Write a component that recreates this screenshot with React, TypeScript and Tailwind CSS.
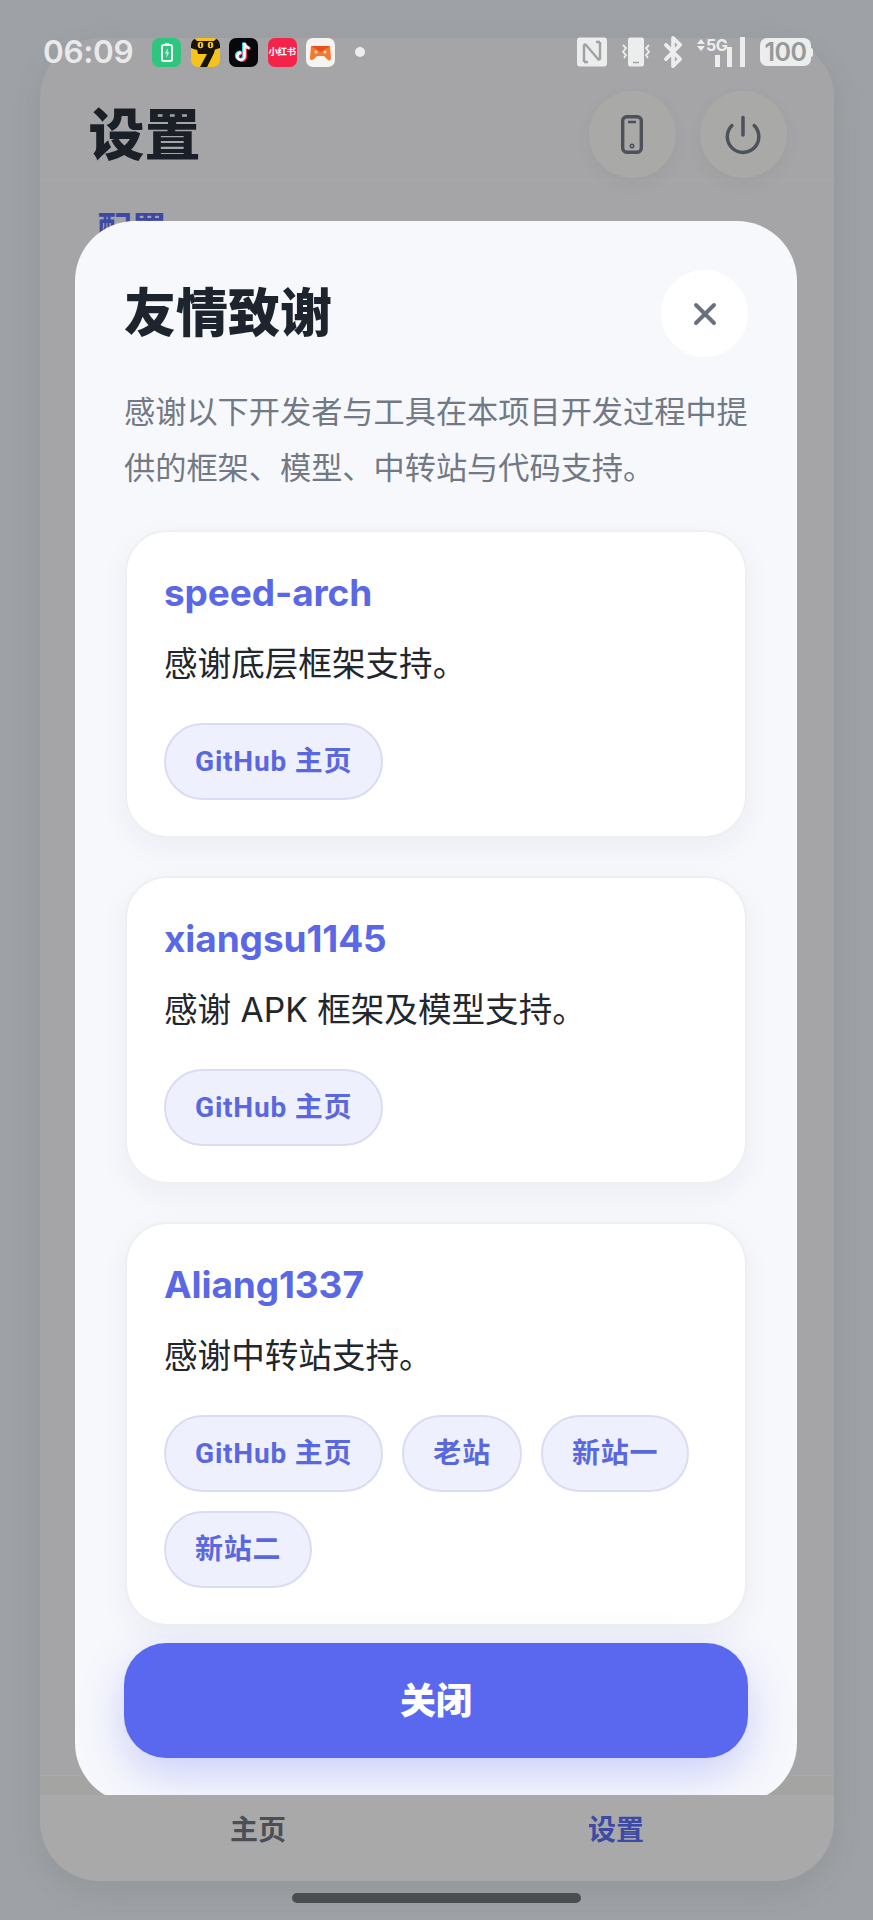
import { Bluetooth, Power, X } from "lucide-react";

const cjk = "font-['Inter','Noto_Sans_CJK_SC',sans-serif]";

type Credit = {
  name: string;
  note: string;
  links: string[];
};

const credits: Credit[] = [
  { name: "speed-arch", note: "感谢底层框架支持。", links: ["GitHub 主页"] },
  { name: "xiangsu1145", note: "感谢 APK 框架及模型支持。", links: ["GitHub 主页"] },
  { name: "Aliang1337", note: "感谢中转站支持。", links: ["GitHub 主页", "老站", "新站一", "新站二"] },
];

function BatteryApp() {
  return (
    <div className="flex h-[29px] w-[29px] items-center justify-center rounded-[7px] bg-[#2fc57f]">
      <svg width="14" height="20" viewBox="0 0 14 20" fill="none">
        <path d="M5 1h4v2H5z" fill="#eefbf4" />
        <rect x="2" y="3" width="10" height="16" rx="1.5" stroke="#eefbf4" strokeWidth="2" />
        <path d="M8 6 5 11.5h2L6 16l3.2-5.5H7.2z" fill="#eefbf4" />
      </svg>
    </div>
  );
}

function CatApp() {
  return (
    <div className="h-[29px] w-[29px] overflow-hidden rounded-[7px] bg-[#f6c31c]">
      <svg width="29" height="29" viewBox="0 0 29 29">
        <path d="M0 0h3l3 3h17l3-3h3v10c-4 1-6 2-8 2H8c-3 0-5-1-8-2z" fill="#17130f" />
        <ellipse cx="9.5" cy="7" rx="2.8" ry="3.2" fill="#f6c31c" />
        <ellipse cx="19.5" cy="7" rx="2.8" ry="3.2" fill="#f6c31c" />
        <path d="M9.5 5v4M19.5 5v4" stroke="#17130f" strokeWidth="1.2" />
        <path d="M6 11h18l-1 4-7 14H9l7-13H7z" fill="#17130f" />
      </svg>
    </div>
  );
}

function TiktokApp() {
  const note = "M15.5 5v13.2a3.6 3.6 0 1 1-3-3.5M15.5 5c.4 2.8 2.2 4.6 5 5";
  return (
    <div className="h-[29px] w-[29px] rounded-[7px] bg-[#08070c]">
      <svg width="29" height="29" viewBox="0 0 29 29" fill="none">
        <path d={note} stroke="#2ad8e0" strokeWidth="3" transform="translate(-1 -0.6)" />
        <path d={note} stroke="#f0305a" strokeWidth="3" transform="translate(1 0.8)" />
        <path d={note} stroke="#ffffff" strokeWidth="2.6" />
      </svg>
    </div>
  );
}

function RedBookApp() {
  return (
    <div className={`flex h-[29px] w-[29px] items-center justify-center rounded-[7px] bg-[#f3234a] text-[9.500px] font-bold leading-none tracking-[-0.5px] text-white ${cjk}`}>
      小红书
    </div>
  );
}

function GameApp() {
  return (
    <div className="h-[29px] w-[29px] rounded-[7px] bg-[#f6f3f0]">
      <svg width="29" height="29" viewBox="0 0 29 29">
        <path d="M5 8h19l1 12c0 3-3 3-4 1l-3-3h-7l-3 3c-2 2-4 1-4-1z" fill="#f3792b" />
        <path d="M5 8h19l-9.500 6z" fill="#e94f1d" />
        <path d="M8 14h4M10 12v4" stroke="#fde3c8" strokeWidth="1" />
        <circle cx="19" cy="14" r="1.500" fill="#fde3c8" />
      </svg>
    </div>
  );
}

function StatusBar() {
  return (
    <div className="absolute left-0 top-[37px] z-30 flex h-[30px] w-full items-center justify-between pl-[43px] pr-[60px]">
      <div className="flex items-center">
        <span className="w-[109px] font-['Inter',sans-serif] text-[31.500px] font-semibold leading-none tracking-[-0.3px] text-[#e9eaeb]">06:09</span>
        <div className="flex items-center gap-[9.500px]">
          <BatteryApp />
          <CatApp />
          <TiktokApp />
          <RedBookApp />
          <GameApp />
        </div>
        <span className="ml-[20px] h-[10px] w-[10px] rounded-full bg-[#eceded]" />
      </div>
      <div className="flex items-center">
        <svg width="30" height="30" viewBox="0 0 30 30">
          <rect width="30" height="29" y="0.500" rx="3" fill="#eceded" />
          <path d="M7 25V9c0-1.500 1-2 2-1l12 14c1 1 2 .5 2-1V5" fill="none" stroke="#a0a3a5" strokeWidth="2.500" />
          <path d="M7 25h4M19 5h4" fill="none" stroke="#a0a3a5" strokeWidth="2.500" />
        </svg>
        <svg className="ml-[14px]" width="31" height="30" viewBox="0 0 31 30">
          <rect x="7" y="0.500" width="16" height="29" rx="2.500" fill="#eceded" />
          <path d="M12 25.500h6" stroke="#a0a3a5" strokeWidth="1.500" />
          <path d="M2 8l3 3-3 4 3 3-2 3M28 8l-3 3 3 4-3 3 2 3" fill="none" stroke="#eceded" strokeWidth="1.800" />
        </svg>
        <Bluetooth className="ml-[4px] text-[#eceded]" size={34} strokeWidth={2.600} />
        <div className="relative ml-[7px] h-[30px] w-[48px]">
          <span className="absolute left-[9px] top-[-1px] font-['Inter',sans-serif] text-[16px] font-bold leading-[18px] tracking-[-0.5px] text-[#eceded]">5G</span>
          <span className="absolute left-0 top-[2px] h-0 w-0 border-x-[4px] border-b-[5px] border-x-transparent border-b-[#eceded]" />
          <span className="absolute left-0 top-[9px] h-0 w-0 border-x-[4px] border-t-[5px] border-x-transparent border-t-[#eceded]" />
          <span className="absolute bottom-0 left-[18px] h-[12px] w-[5px] bg-[#eceded]" />
          <span className="absolute bottom-0 left-[30px] h-[20px] w-[5px] bg-[#eceded]" />
          <span className="absolute bottom-0 left-[43px] h-[30px] w-[5px] bg-[#eceded]" />
        </div>
        <div className="ml-[15px] flex items-center">
          <div className="flex h-[28px] w-[51px] items-center justify-center rounded-[7px] bg-[#eceded] font-['Inter',sans-serif] text-[25px] font-semibold leading-none tracking-[-0.5px] text-[#96999c]">100</div>
          <span className="h-[9px] w-[2px] rounded-r-full bg-[#eceded]" />
        </div>
      </div>
    </div>
  );
}

function RoundIconButton({ children }: { children: React.ReactNode }) {
  return (
    <div className="flex h-[87px] w-[87px] items-center justify-center rounded-full bg-[#a9a9a8] shadow-[0_6px_16px_rgba(60,60,70,0.06)]">{children}</div>
  );
}

function CreditCard({ credit }: { credit: Credit }) {
  return (
    <article className={`rounded-[42px] border-2 border-[#eeeff3] bg-white px-[37px] pb-[36px] pt-[34px] shadow-[0_10px_30px_rgba(30,40,70,0.05)] ${cjk}`}>
      <h3 className="text-[37px] font-bold leading-[54px] tracking-[-0.1px] text-[#5a68e6]">{credit.name}</h3>
      <p className="mt-[19px] text-[33.600px] leading-[50px] text-[#22262d]">{credit.note}</p>
      <div className="mt-[34px] flex flex-wrap gap-x-[19px] gap-y-[19px]">
        {credit.links.map((link) => (
          <span
            key={link}
            className="flex h-[77px] items-center rounded-full border-2 border-[#dadcf3] bg-[#eff0fd] px-[29px] font-['Roboto','Noto_Sans_CJK_SC',sans-serif] text-[28px] font-bold tracking-[0.8px] text-[#5a68e0]"
          >
            {link}
          </span>
        ))}
      </div>
    </article>
  );
}

function CreditsModal() {
  return (
    <section className={`absolute left-[75px] top-[221px] z-10 h-[1582px] w-[722px] rounded-[60px] bg-[#f7f8fc] px-[50px] pt-[49px] ${cjk}`}>
      <div className="flex h-[87px] items-center justify-between">
        <h2 className="-ml-px text-[52px] font-black text-[#1e242d]">友情致谢</h2>
        <button className="-mr-px flex h-[87px] w-[87px] items-center justify-center rounded-full bg-white text-[#69707e]">
          <X size={36} strokeWidth={2.600} />
        </button>
      </div>
      <p className="mt-[27px] -ml-px w-[632px] text-[31.200px] leading-[56px] text-[#727985]">
        感谢以下开发者与工具在本项目开发过程中提供的框架、模型、中转站与代码支持。
      </p>
      <div className="mt-[34px] flex flex-col gap-[38px]">
        {credits.map((credit) => (
          <CreditCard key={credit.name} credit={credit} />
        ))}
      </div>
      <button className="mt-[17px] flex h-[115px] w-[624px] -translate-x-px items-center justify-center rounded-[42px] bg-[#5a68f0] text-[36px] font-black text-white shadow-[0_16px_44px_rgba(90,104,240,0.28)]">
        关闭
      </button>
    </section>
  );
}

export default function App() {
  return (
    <div className={`relative flex h-[1920px] w-[873px] flex-col items-center overflow-hidden bg-[#9ea1a5] pt-[38px] ${cjk}`}>
      <StatusBar />
      <div className="flex h-[1843px] w-[794px] flex-col overflow-hidden rounded-[60px] bg-[#a5a5a8] shadow-[0_10px_30px_rgba(70,70,80,0.12)]">
        <header className="flex h-[143px] shrink-0 items-end justify-between border-b border-[#a8a8aa] pb-[2px] pl-[49px] pr-[47px]">
          <h1 className="mb-[8px] text-[56px] font-black leading-[70px] text-[#1b2028]">设置</h1>
          <div className="flex gap-[24px]">
            <RoundIconButton>
              <svg width="22" height="39" viewBox="0 0 22 39" fill="none" stroke="#4d5158" strokeWidth="3.400">
                <rect x="1.700" y="1.700" width="18.600" height="35.600" rx="4" />
                <path d="M7 7h8" strokeWidth="2.600" />
                <circle cx="11" cy="31" r="0.800" />
              </svg>
            </RoundIconButton>
            <RoundIconButton>
              <Power className="text-[#4d5158]" size={42} strokeWidth={2} />
            </RoundIconButton>
          </div>
        </header>
        <div className="flex-1 pl-[58px] pt-[24px]">
          <p className="text-[34.500px] font-bold leading-[48px] text-[#3e49a3]">配置</p>
        </div>
        <div className="h-[20px] shrink-0 border-t border-[#a9a9a6] bg-[#a4a4a2]" />
        <nav className="relative z-20 grid h-[86px] shrink-0 grid-cols-2 bg-[#a9a9a9] pb-[36px] text-[28px] font-bold">
          <div className="flex items-center justify-center text-[#4b4e55]">
            <span className="ml-[40px] leading-[70px]">主页</span>
          </div>
          <div className="flex items-center justify-center text-[#3e49a3]">
            <span className="mr-[38px] leading-[70px]">设置</span>
          </div>
        </nav>
      </div>
      <span className="mt-[12px] h-[10px] w-[289px] rounded-full bg-[#4a4e51]" />
      <CreditsModal />
    </div>
  );
}
